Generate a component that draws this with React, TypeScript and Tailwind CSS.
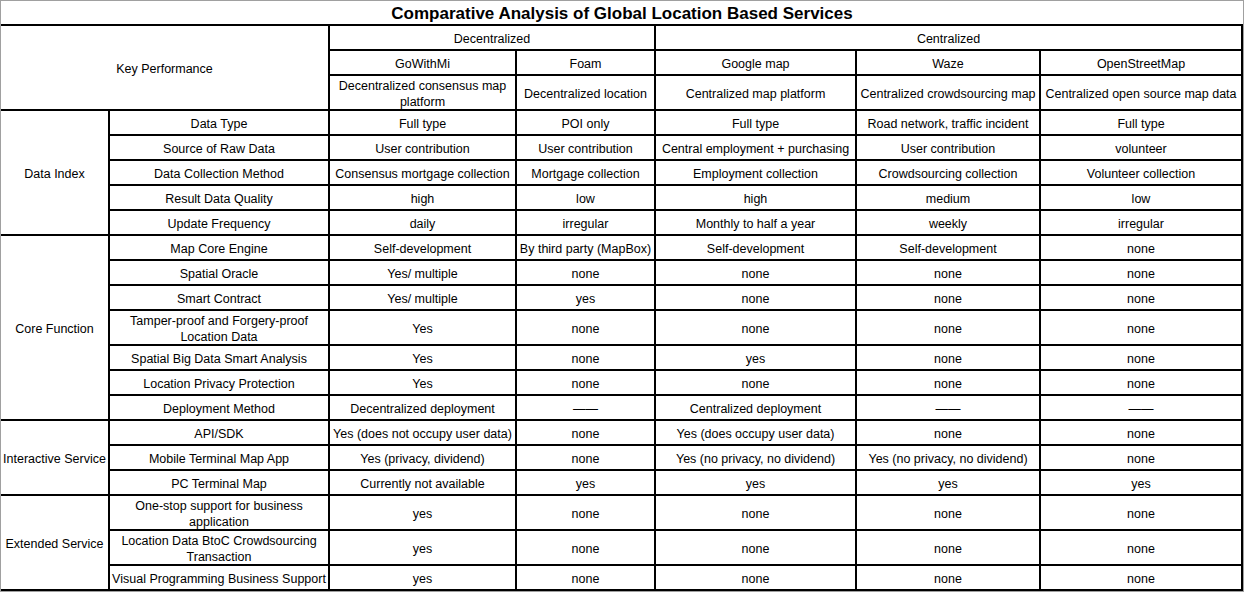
const cell = "flex items-center justify-center text-center border-r-2 border-b-2 border-black leading-[16px] px-[1px] pt-[3px]";

const products = ["GoWithMi", "Foam", "Google map", "Waze", "OpenStreetMap"];
const descriptions = [
  "Decentralized consensus map platform",
  "Decentralized location",
  "Centralized map platform",
  "Centralized crowdsourcing map",
  "Centralized open source map data",
];

const groups = [
  {
    name: "Data Index",
    span: "row-span-5",
    rows: [
      ["Data Type", "Full type", "POI only", "Full type", "Road network, traffic incident", "Full type"],
      ["Source of Raw Data", "User contribution", "User contribution", "Central employment + purchasing", "User contribution", "volunteer"],
      ["Data Collection Method", "Consensus mortgage collection", "Mortgage collection", "Employment collection", "Crowdsourcing collection", "Volunteer collection"],
      ["Result Data Quality", "high", "low", "high", "medium", "low"],
      ["Update Frequency", "daily", "irregular", "Monthly to half a year", "weekly", "irregular"],
    ],
  },
  {
    name: "Core Function",
    span: "row-span-7",
    rows: [
      ["Map Core Engine", "Self-development", "By third party (MapBox)", "Self-development", "Self-development", "none"],
      ["Spatial Oracle", "Yes/ multiple", "none", "none", "none", "none"],
      ["Smart Contract", "Yes/ multiple", "yes", "none", "none", "none"],
      ["Tamper-proof and Forgery-proof Location Data", "Yes", "none", "none", "none", "none"],
      ["Spatial Big Data Smart Analysis", "Yes", "none", "yes", "none", "none"],
      ["Location Privacy Protection", "Yes", "none", "none", "none", "none"],
      ["Deployment Method", "Decentralized deployment", "——", "Centralized deployment", "——", "——"],
    ],
  },
  {
    name: "Interactive Service",
    span: "row-span-3",
    rows: [
      ["API/SDK", "Yes (does not occupy user data)", "none", "Yes (does occupy user data)", "none", "none"],
      ["Mobile Terminal Map App", "Yes (privacy, dividend)", "none", "Yes (no privacy, no dividend)", "Yes (no privacy, no dividend)", "none"],
      ["PC Terminal Map", "Currently not available", "yes", "yes", "yes", "yes"],
    ],
  },
  {
    name: "Extended Service",
    span: "row-span-3",
    rows: [
      ["One-stop support for business application", "yes", "none", "none", "none", "none"],
      ["Location Data BtoC Crowdsourcing Transaction", "yes", "none", "none", "none", "none"],
      ["Visual Programming Business Support", "yes", "none", "none", "none", "none"],
    ],
  },
];

export default function App() {
  return (
    <div
      className="w-[1244px] h-[592px] border border-[#a0a0a0] bg-white text-black text-[12.5px] overflow-hidden"
      style={{ fontFamily: '"Liberation Sans", Arial, sans-serif' }}
    >
      <div className="h-[25px] flex items-center justify-center pt-[3px] border-b-2 border-black font-bold text-[17px]">
        Comparative Analysis of Global Location Based Services
      </div>
      <div className="grid grid-cols-[109px_220px_187px_139px_201px_184px_202px] grid-rows-[25px_25px_35px_25px_25px_25px_25px_25px_25px_25px_25px_35px_25px_25px_25px_25px_25px_25px_35px_35px_25px]">
        <div className={`${cell} col-span-2 row-span-3`}>Key Performance</div>
        <div className={`${cell} col-span-2`}>Decentralized</div>
        <div className={`${cell} col-span-3`}>Centralized</div>
        {products.map((p) => (
          <div key={p} className={cell}>
            {p}
          </div>
        ))}
        {descriptions.map((d) => (
          <div key={d} className={cell}>
            {d}
          </div>
        ))}
        {groups.map((g) => (
          <div key={g.name} className="contents">
            <div className={`${cell} ${g.span}`}>{g.name}</div>
            {g.rows.map((row) =>
              row.map((v, i) => (
                <div key={g.name + row[0] + i} className={cell}>
                  {v}
                </div>
              ))
            )}
          </div>
        ))}
      </div>
    </div>
  );
}
